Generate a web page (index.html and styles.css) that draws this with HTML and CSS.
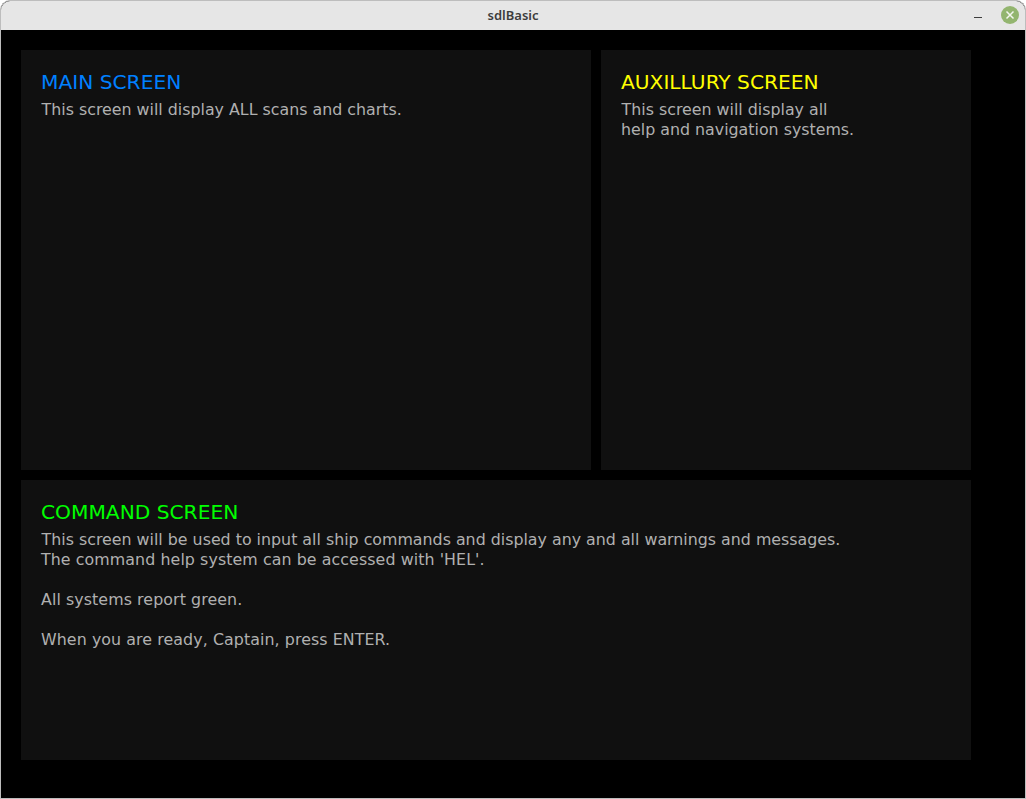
FILE: index.html
```html
<!DOCTYPE html>
<html lang="en">
<head>
<meta charset="utf-8">
<title>sdlBasic</title>
<link rel="stylesheet" href="styles.css">
</head>
<body>
<div class="window">
  <header class="titlebar">
    <span class="title">sdlBasic</span>
    <span class="minimize"></span>
    <span class="close">
      <svg width="18" height="18" viewBox="0 0 18 18"><circle cx="9" cy="9" r="9" fill="#93b56f"/><path d="M5.5 5.5l7 7M12.5 5.5l-7 7" stroke="#f4f6f0" stroke-width="1.5" fill="none"/></svg>
    </span>
  </header>
  <main class="screen">
    <section class="panel">
      <h2 class="heading blue">MAIN SCREEN</h2>
      <p class="copy">This screen will display ALL scans and charts.</p>
    </section>
    <section class="panel">
      <h2 class="heading yellow">AUXILLURY SCREEN</h2>
      <p class="copy">This screen will display all<br>help and navigation systems.</p>
    </section>
    <section class="panel wide">
      <h2 class="heading green">COMMAND SCREEN</h2>
      <p class="copy">This screen will be used to input all ship commands and display any and all warnings and messages.<br><span class="loose">The command help system can be accessed with 'HEL'.</span><br><br><span class="loose">All systems report green.</span><br><br><span class="loose">When you are ready, Captain, press ENTER.</span></p>
    </section>
  </main>
</div>
</body>
</html>
```
FILE: styles.css
```css
* { box-sizing: border-box; }
html, body { margin: 0; height: 100%; background: #fff; }
.window {
  width: 1026px;
  height: 799px;
  display: flex;
  flex-direction: column;
  border: 1px solid #bdbdbd;
  border-radius: 10px 10px 0 0;
  background: #000;
  overflow: hidden;
}
.titlebar {
  height: 29px;
  flex: none;
  background: #e6e6e6;
  position: relative;
  display: flex;
  align-items: center;
  justify-content: center;
  padding-bottom: 2px;
}
.title {
  font: 600 13px "Noto Sans", sans-serif;
  color: #3d3d3d;
}
.minimize {
  position: absolute;
  left: 973px;
  top: 16px;
  width: 8px;
  height: 1px;
  background: #3d3d3d;
}
.close {
  position: absolute;
  left: 1000px;
  top: 5px;
  width: 18px;
  height: 18px;
  display: block;
}
.close svg { display: block; }
.screen {
  flex: 1;
  display: grid;
  grid-template-columns: 570px 370px;
  grid-template-rows: 420px 280px;
  gap: 10px;
  padding: 20px;
  align-content: start;
  font-family: "DejaVu Sans", sans-serif;
}
.panel {
  background: #101010;
  padding: 20px;
}
.wide { grid-column: 1 / span 2; }
.heading {
  margin: 0 0 6px;
  font-size: 20.2px;
  font-weight: 400;
  line-height: 24px;
}
.blue { color: #0080ff; }
.yellow { color: #ffff00; }
.green { color: #00ff00; }
.copy {
  margin: 0;
  font-size: 15.83px;
  line-height: 20px;
  color: #b0b0b0;
  text-indent: 0.6px;
}
.loose { letter-spacing: 0.08px; }
```
